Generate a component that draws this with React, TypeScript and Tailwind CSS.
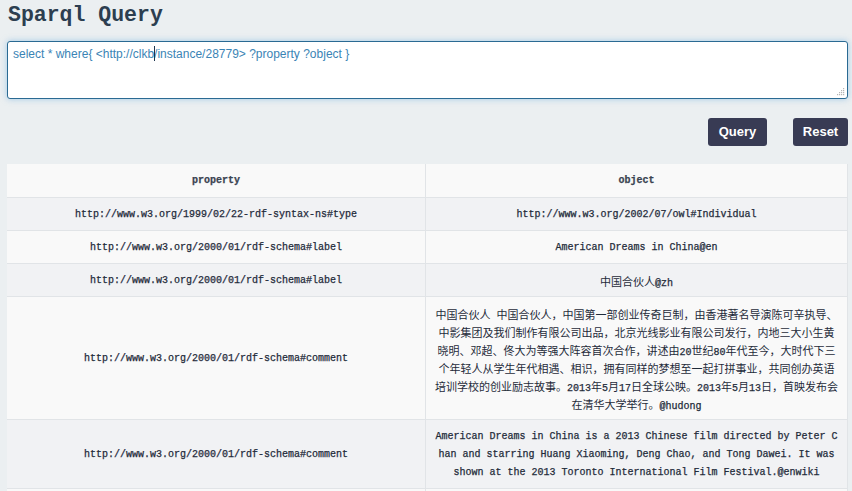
import React from "react";

const MONO = "font-['Liberation_Mono','Courier_New',monospace]";

function Mixed({ text }: { text: string }) {
  const parts = text.split(/([\u3000-\u303f\u4e00-\u9fff\uff00-\uffef]+)/);
  return (
    <>
      {parts.map((p, i) =>
        /[\u3000-\u303f\u4e00-\u9fff\uff00-\uffef]/.test(p) ? (
          <span
            key={i}
            className="text-[11px] leading-[18px] font-['Noto_Sans_CJK_SC',sans-serif] [-webkit-text-stroke:0px]"
          >
            {p}
          </span>
        ) : (
          <span key={i}>{p}</span>
        )
      )}
    </>
  );
}

const rows: { p: string; o: string[] }[] = [
  {
    p: "http://www.w3.org/1999/02/22-rdf-syntax-ns#type",
    o: ["http://www.w3.org/2002/07/owl#Individual"],
  },
  {
    p: "http://www.w3.org/2000/01/rdf-schema#label",
    o: ["American Dreams in China@en"],
  },
  {
    p: "http://www.w3.org/2000/01/rdf-schema#label",
    o: ["中国合伙人@zh"],
  },
  {
    p: "http://www.w3.org/2000/01/rdf-schema#comment",
    o: [
      "中国合伙人 中国合伙人，中国第一部创业传奇巨制，由香港著名导演陈可辛执导、",
      "中影集团及我们制作有限公司出品，北京光线影业有限公司发行，内地三大小生黄",
      "晓明、邓超、佟大为等强大阵容首次合作，讲述由20世纪80年代至今，大时代下三",
      "个年轻人从学生年代相遇、相识，拥有同样的梦想至一起打拼事业，共同创办英语",
      "培训学校的创业励志故事。2013年5月17日全球公映。2013年5月13日，首映发布会",
      "在清华大学举行。@hudong",
    ],
  },
  {
    p: "http://www.w3.org/2000/01/rdf-schema#comment",
    o: [
      "American Dreams in China is a 2013 Chinese film directed by Peter C",
      "han and starring Huang Xiaoming, Deng Chao, and Tong Dawei. It was",
      "shown at the 2013 Toronto International Film Festival.@enwiki",
    ],
  },
];

function Grip() {
  const dots: [number, number][] = [
    [6, 0],
    [4, 2],
    [6, 2],
    [2, 4],
    [4, 4],
    [6, 4],
    [0, 6],
    [2, 6],
    [4, 6],
    [6, 6],
  ];
  return (
    <svg
      width="8"
      height="8"
      viewBox="0 0 8 8"
      className="absolute right-[2px] bottom-[2px]"
    >
      {dots.map(([x, y], i) => (
        <rect key={i} x={x} y={y} width="1.2" height="1.2" fill="#b5b5b5" />
      ))}
    </svg>
  );
}

export default function App() {
  return (
    <div className="h-[491px] overflow-hidden bg-[#ebeff1] pl-[7px] pr-[4px] pt-[3px]">
      <h1
        className={`${MONO} pl-[1px] text-[21.5px] leading-[24px] font-bold text-[#2c3e50]`}
      >
        Sparql Query
      </h1>

      <div className="relative mt-[14px] h-[58px] rounded-[3px] border border-[#2a6a93] bg-white px-[5px] pt-[4px] font-['Liberation_Sans',Arial,sans-serif] text-[12px] leading-[16px] text-[#3a84b5] shadow-[0_0_6px_rgba(100,170,220,0.55)]">
        select * where{"{"} &lt;http://clkb
        <span className="relative">
          <span className="absolute left-0 top-[-1px] h-[15px] w-px bg-[#1d3550]" />
        </span>
        /instance/28779&gt; ?property ?object {"}"}
        <Grip />
      </div>

      <div className="mt-[19px] flex justify-end gap-[26px]">
        <button className="h-[28px] w-[59px] rounded-[3px] bg-[#383b54] font-['Liberation_Sans',Arial,sans-serif] text-[13px] font-bold text-white">
          Query
        </button>
        <button className="h-[28px] w-[55px] rounded-[3px] bg-[#383b54] font-['Liberation_Sans',Arial,sans-serif] text-[13px] font-bold text-white">
          Reset
        </button>
      </div>

      <div
        className={`mt-[18px] ${MONO} text-[10px] leading-[18px] text-[#1f2b3a] [-webkit-text-stroke:0.25px]`}
      >
        <div className="grid grid-cols-[419px_1fr] border-b border-[#e1e4e7] bg-[#f9f9f9]">
          <div className="flex h-[33px] items-center justify-center border-r border-[#e1e4e7] pt-[1px] font-bold text-[#3b4452]">
            property
          </div>
          <div className="flex h-[33px] items-center justify-center border-r border-[#e1e4e7] pt-[1px] font-bold text-[#3b4452]">
            object
          </div>
        </div>
        {rows.map((r, i) => (
          <div
            key={i}
            className={`grid grid-cols-[419px_1fr] border-b border-[#e1e4e7] ${
              i % 2 === 0 ? "bg-[#f1f2f4]" : "bg-[#f9f9f9]"
            }`}
          >
            <div className="flex items-center justify-center border-r border-[#e1e4e7] pt-[8px] pb-[6px]">
              <div className="h-[18px]">{r.p}</div>
            </div>
            <div className="flex flex-col items-center justify-center border-r border-[#e1e4e7] pt-[8px] pb-[6px]">
              {r.o.map((line, j) => (
                <div key={j} className="h-[18px] whitespace-pre text-center">
                  <Mixed text={line} />
                </div>
              ))}
            </div>
          </div>
        ))}
        <div className="grid h-[40px] grid-cols-[419px_1fr] bg-[#f9f9f9]">
          <div className="border-r border-[#e1e4e7]" />
          <div className="border-r border-[#e1e4e7]" />
        </div>
      </div>
    </div>
  );
}
